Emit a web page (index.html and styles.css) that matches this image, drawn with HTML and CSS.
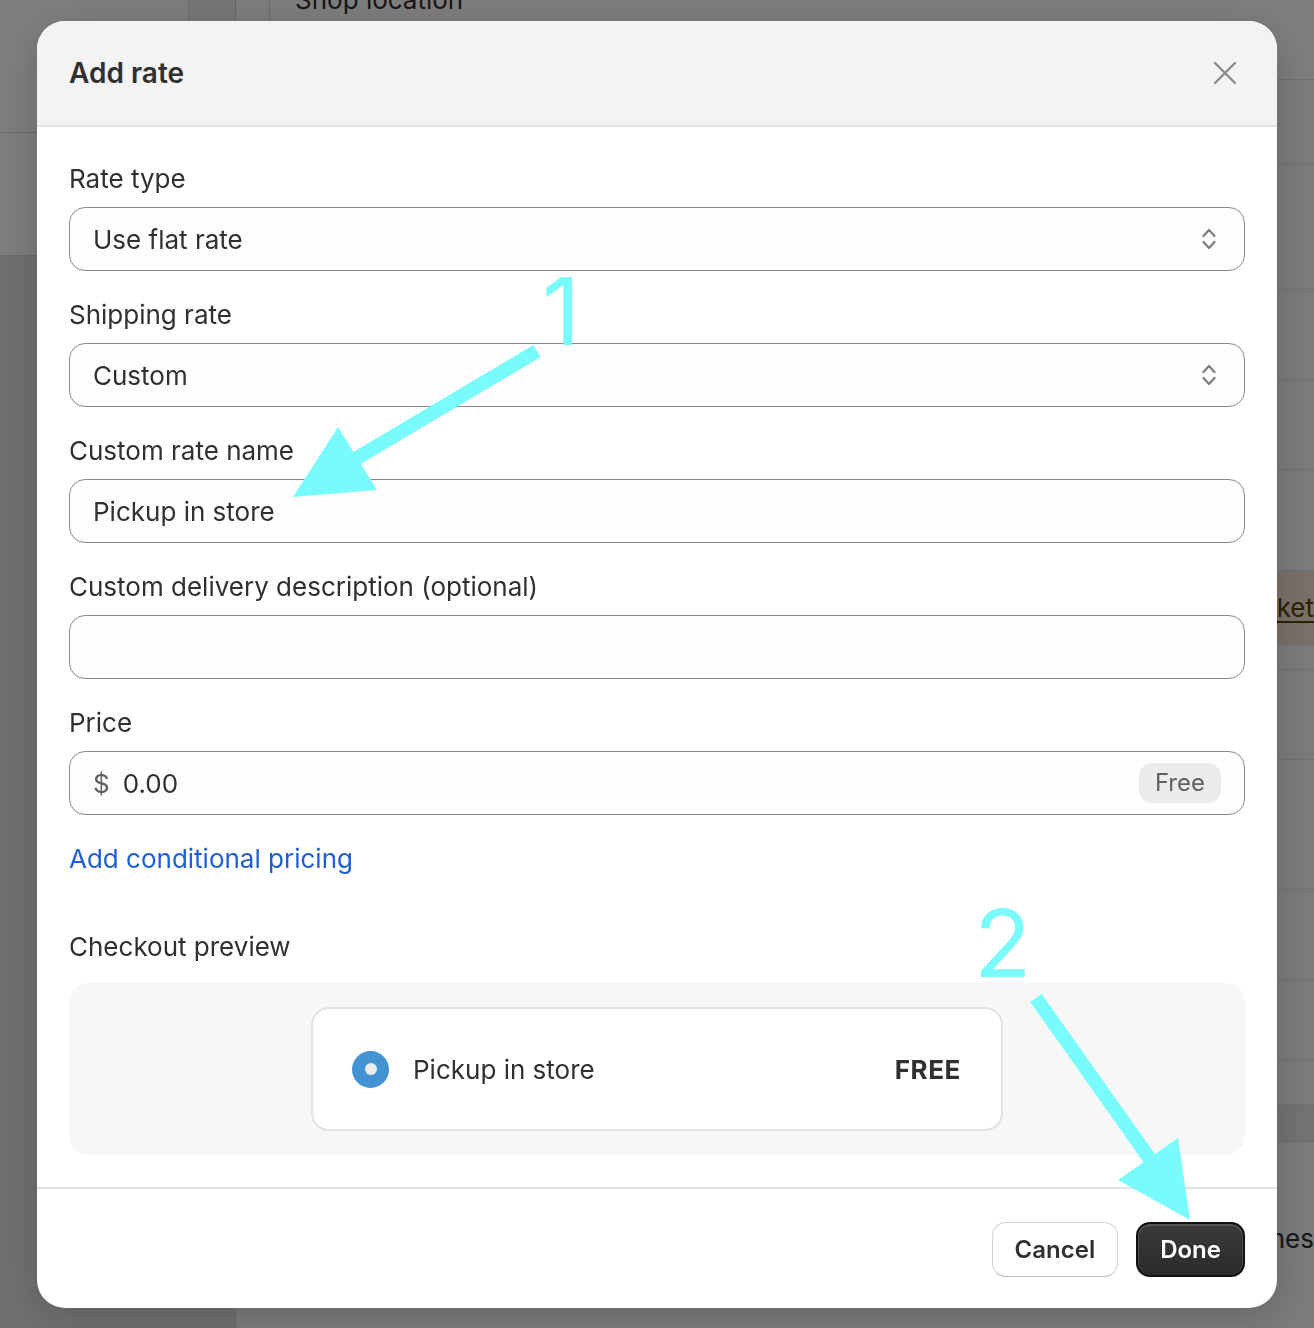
FILE: index.html
```html
<!DOCTYPE html>
<html lang="en">
<head>
<meta charset="utf-8">
<title>Add rate</title>
<link rel="stylesheet" href="styles.css">
</head>
<body>
<div class="page">
  <aside class="sidebar">
    <div class="side-top">
      <div class="side-row side-row-first"><div class="side-fill"></div><div class="side-strip"></div></div>
      <div class="side-row side-row-second"></div>
    </div>
  </aside>
  <main class="main">
    <div class="main-head">
      <div class="head-gap"></div>
      <div class="head-title">Shop location</div>
    </div>
    <div class="row h85"></div>
    <div class="row h125"></div>
    <div class="row h90"></div>
    <div class="row h90"></div>
    <div class="row h101"></div>
    <div class="row banner"><span class="banner-text">Pickup is only available in your primary </span><a class="banner-link">market</a></div>
    <div class="row h25"></div>
    <div class="row h90"></div>
    <div class="row h130"></div>
    <div class="row h90"></div>
    <div class="row h80"></div>
    <div class="row h45"></div>
    <div class="row band"></div>
    <div class="row last"><span class="last-text">branches</span></div>
  </main>
</div>

<div class="backdrop"></div>

<div class="modal" role="dialog" aria-labelledby="modal-title">
  <header class="modal-head">
    <h2 class="modal-title" id="modal-title">Add rate</h2>
    <button class="close-btn" aria-label="Close">
      <svg class="close-icon" viewBox="0 0 24 24" width="24" height="24"><path d="M2 2 L22 22 M22 2 L2 22" /></svg>
    </button>
  </header>

  <div class="modal-body">
    <div class="field">
      <div class="field-label">Rate type</div>
      <div class="control select">
        <span class="value">Use flat rate</span>
        <svg class="chev" viewBox="0 0 18 26" width="18" height="26"><path d="M3.5 10 L9 4 L14.5 10 M3.5 16 L9 22 L14.5 16" /></svg>
      </div>
    </div>
    <div class="field">
      <div class="field-label">Shipping rate</div>
      <div class="control select">
        <span class="value">Custom</span>
        <svg class="chev" viewBox="0 0 18 26" width="18" height="26"><path d="M3.5 10 L9 4 L14.5 10 M3.5 16 L9 22 L14.5 16" /></svg>
      </div>
    </div>
    <div class="field">
      <div class="field-label">Custom rate name</div>
      <div class="control"><span class="value">Pickup in store</span></div>
    </div>
    <div class="field">
      <div class="field-label">Custom delivery description (optional)</div>
      <div class="control"></div>
    </div>
    <div class="field">
      <div class="field-label">Price</div>
      <div class="control price">
        <span class="prefix">$</span>
        <span class="value grow">0.00</span>
        <span class="badge">Free</span>
      </div>
    </div>

    <a class="link">Add conditional pricing</a>

    <div class="field-label preview-label">Checkout preview</div>
    <div class="preview">
      <div class="preview-card">
        <span class="radio"><span class="radio-dot"></span></span>
        <span class="preview-name">Pickup in store</span>
        <span class="preview-price">FREE</span>
      </div>
    </div>
  </div>

  <footer class="modal-foot">
    <button class="btn btn-secondary">Cancel</button>
    <button class="btn btn-primary">Done</button>
  </footer>
</div>

<svg class="annotations" viewBox="0 0 1314 1328" width="1314" height="1328">
  <line x1="537" y1="351" x2="352" y2="461" class="arrow-shaft" />
  <polygon points="338,427 293,497 377,490" class="arrow-head" />
  <text x="542" y="345" class="anno-num">1</text>
  <line x1="1036" y1="998" x2="1152" y2="1162" class="arrow-shaft" />
  <polygon points="1178,1138 1118,1180 1190,1220" class="arrow-head" />
  <text x="974" y="977" class="anno-num">2</text>
</svg>
</body>
</html>
```

FILE: styles.css
```css
* { box-sizing: border-box; }

html, body {
  margin: 0;
  padding: 0;
  width: 1314px;
  height: 1328px;
  overflow: hidden;
}

body {
  font-family: Inter, "Noto Sans", "Liberation Sans", sans-serif;
  color: #303030;
  background: #f2f2f2;
}

/* ---------- background page ---------- */
.page {
  display: grid;
  grid-template-columns: 236px 1fr;
  height: 1328px;
}

.sidebar {
  background: #e0e0e0;
  border-right: 1px solid #cfcfcf;
  display: flex;
  flex-direction: column;
}

.side-top { background: #fdfdfd; }

.side-row {
  border-bottom: 1px solid #d6d6d6;
}
.side-row-first {
  height: 133px;
  display: grid;
  grid-template-columns: 188px 1fr;
}
.side-row-second { height: 123px; }

.side-strip {
  background: #eeeeee;
  border-left: 1px solid #dedede;
}

.main {
  background: #f4f4f4;
  display: flex;
  flex-direction: column;
  overflow: hidden;
}

.main-head {
  height: 80px;
  display: flex;
  align-items: flex-start;
  border-bottom: 1px solid #e2e2e2;
  background: #fdfdfd;
}
.head-gap {
  width: 34px;
  height: 100%;
  border-right: 1px solid #d8d8d8;
}
.head-title {
  padding-left: 25px;
  margin-top: -13px;
  font-size: 26px;
  line-height: 26px;
  color: #303030;
}

.row {
  border-bottom: 1px solid #e2e2e2;
  background: #f7f7f7;
  flex: none;
}
.h25 { height: 25px; }
.h45 { height: 45px; }
.h80 { height: 80px; }
.h85 { height: 85px; }
.h90 { height: 90px; }
.h101 { height: 101px; }
.h125 { height: 125px; }
.h130 { height: 130px; }

.banner {
  height: 74px;
  background: #f0e3d3;
  display: flex;
  align-items: center;
  justify-content: flex-end;
  font-size: 26px;
  color: #4a3a22;
  white-space: nowrap;
}
.banner-link {
  color: #5e4200;
  text-decoration: underline;
  text-underline-offset: 4px;
}

.band { height: 38px; background: #e6e6e6; }

.last {
  flex: 1;
  display: flex;
  justify-content: flex-end;
  align-items: flex-start;
  padding-top: 80px;
  font-size: 26px;
  white-space: nowrap;
  color: #303030;
  border-bottom: none;
}

.backdrop {
  position: fixed;
  inset: 0;
  background: rgba(0, 0, 0, 0.5);
}

/* ---------- modal ---------- */
.modal {
  position: fixed;
  left: 37px;
  top: 21px;
  width: 1240px;
  height: 1287px;
  background: #ffffff;
  border-radius: 28px;
  overflow: hidden;
  display: flex;
  flex-direction: column;
  box-shadow: 0 8px 40px rgba(0, 0, 0, 0.18);
}

.modal-head {
  height: 106px;
  flex: none;
  background: #f3f3f3;
  border-bottom: 2px solid #e3e3e3;
  display: flex;
  align-items: center;
  justify-content: space-between;
  padding: 0 40px 0 32px;
}

.modal-title {
  margin: 0;
  font-size: 28px;
  font-weight: 600;
  color: #303030;
}

.close-btn {
  border: 0;
  background: transparent;
  padding: 0;
  width: 24px;
  height: 24px;
  display: flex;
}
.close-icon path {
  stroke: #8a8a8a;
  stroke-width: 2.3;
  fill: none;
  stroke-linecap: round;
}

.modal-body {
  flex: 1;
  padding: 36px 32px 32px;
  display: flex;
  flex-direction: column;
}

.field {
  display: flex;
  flex-direction: column;
  gap: 12px;
}
.field + .field { margin-top: 28px; }

.field-label {
  font-size: 26px;
  line-height: 32px;
  color: #303030;
}

.control {
  height: 64px;
  border: 1px solid #8a8a8a;
  border-radius: 16px;
  background: #fdfdfd;
  display: flex;
  align-items: center;
  padding: 0 23px;
  font-size: 26px;
  color: #303030;
}
.select { padding-right: 26px; justify-content: space-between; }

.chev path {
  stroke: #808080;
  stroke-width: 2.3;
  fill: none;
  stroke-linecap: round;
  stroke-linejoin: round;
}

.price { padding-right: 23px; }
.prefix { color: #616161; margin-right: 13px; }
.grow { flex: 1; }
.badge {
  height: 40px;
  line-height: 40px;
  padding: 0 16px;
  border-radius: 14px;
  background: #ebebeb;
  color: #616161;
  font-size: 24px;
}

.link {
  margin-top: 28px;
  font-size: 26px;
  line-height: 32px;
  color: #1f5fd6;
  align-self: flex-start;
}

.preview-label { margin-top: 56px; }

.preview {
  margin-top: 20px;
  background: #f7f7f7;
  border-radius: 20px;
  padding: 24px;
  display: flex;
  justify-content: center;
}

.preview-card {
  width: 692px;
  height: 124px;
  background: #ffffff;
  border: 2px solid #e3e3e3;
  border-radius: 18px;
  display: flex;
  align-items: center;
  padding: 0 40px 0 39px;
  font-size: 26px;
}

.radio {
  width: 37px;
  height: 37px;
  border-radius: 50%;
  background: #4393d4;
  display: flex;
  align-items: center;
  justify-content: center;
  flex: none;
}
.radio-dot {
  width: 12px;
  height: 12px;
  border-radius: 50%;
  background: #ececec;
}

.preview-name {
  margin-left: 24px;
  flex: 1;
  color: #303030;
}
.preview-price {
  font-weight: 700;
  letter-spacing: 0.6px;
  color: #303030;
}

.modal-foot {
  height: 121px;
  flex: none;
  border-top: 2px solid #e3e3e3;
  display: flex;
  justify-content: flex-end;
  align-items: flex-start;
  gap: 18px;
  padding: 33px 32px 0;
}

.btn {
  font-family: inherit;
  height: 55px;
  padding: 0 22px;
  border-radius: 14px;
  font-size: 24px;
  font-weight: 600;
  cursor: pointer;
}
.btn-secondary {
  background: #ffffff;
  border: 1.5px solid #d4d4d4;
  border-bottom-color: #b8b8b8;
  color: #303030;
}
.btn-primary {
  background: linear-gradient(#3a3a3a, #2b2b2b);
  border: 2px solid #111111;
  color: #ffffff;
  box-shadow: inset 0 1px 0 1px rgba(255, 255, 255, 0.14);
}

/* ---------- annotations ---------- */
.annotations {
  position: fixed;
  left: 0;
  top: 0;
  pointer-events: none;
}
.arrow-shaft {
  stroke: #79fbfb;
  stroke-width: 14;
}
.arrow-head { fill: #79fbfb; }
.anno-num {
  font-family: Inter, "Open Sans", sans-serif;
  font-weight: 400;
  font-size: 94px;
  fill: #79fbfb;
}
```
